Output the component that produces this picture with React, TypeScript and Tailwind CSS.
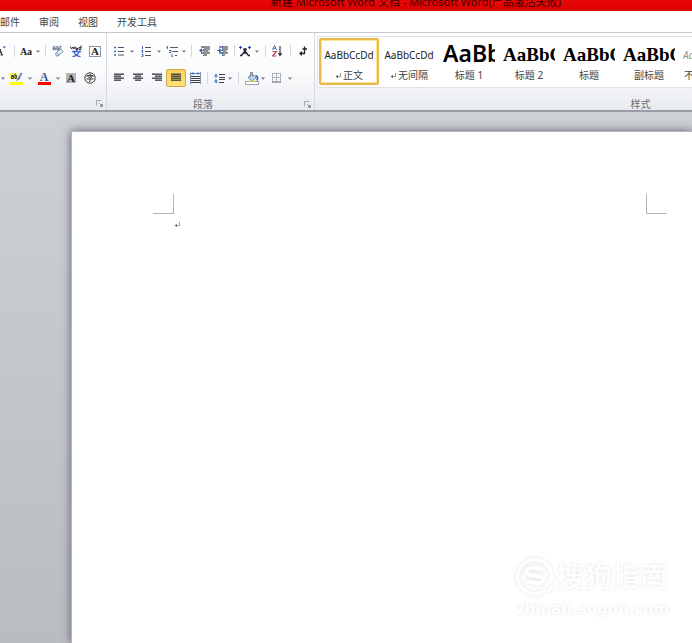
import React from "react";

type IconProps = { children: React.ReactNode; w?: number; h?: number };

function Icon({ children, w = 14, h = 14 }: IconProps) {
  return (
    <svg width={w} height={h} viewBox={`0 0 ${w} ${h}`} fill="none" className="shrink-0" aria-hidden="true">
      {children}
    </svg>
  );
}

function Tool({ label, className, children }: { label: string; className: string; children: React.ReactNode }) {
  return (
    <button type="button" aria-label={label} className={`flex h-[18px] shrink-0 items-center justify-center ${className}`}>
      {children}
    </button>
  );
}

function Arrow({ label, className }: { label: string; className: string }) {
  return (
    <Tool label={label} className={className}>
      <Icon w={4} h={3}>
        <path d="M0 .5h4L2 2.8z" fill="#70747b" />
      </Icon>
    </Tool>
  );
}

function Separator({ className }: { className: string }) {
  return (
    <span className={`flex h-3 shrink-0 justify-center ${className}`}>
      <span className="w-px bg-[#d3d6da]" />
    </span>
  );
}

function Launcher({ label }: { label: string }) {
  return (
    <button type="button" aria-label={label} className="mr-[3px] flex h-2 w-2 items-center justify-center">
      <Icon w={7} h={7}>
        <path d="M.5 5.500v-5h5" stroke="#a5a9af" />
        <path d="M3 3l2 2" stroke="#a5a9af" />
        <path d="M4 4h3v3H4z" fill="#969aa1" />
      </Icon>
    </button>
  );
}

function Lines({ rows }: { rows: [number, number][] }) {
  return (
    <Icon w={10} h={10}>
      {rows.map(([x, width], i) => (
        <rect key={i} x={x} y={i * 2 + 0.5} width={width} height="1.3" fill="#34373b" />
      ))}
    </Icon>
  );
}

function ReturnMark({ color }: { color: string }) {
  return (
    <Icon w={6} h={7}>
      <path d="M5.500 1v3.500H1" stroke={color} strokeWidth=".7" />
      <path d="M.5 4.500l2.500-1.800v3.600z" fill={color} />
    </Icon>
  );
}

function FontGroup() {
  return (
    <section aria-label="字体" className="flex w-[107px] shrink-0 flex-col border-r border-[#d6dade] pt-[9px]">
      <div className="flex items-center">
        <Tool label="缩小字体" className="w-[11px] !justify-start">
          <Icon w={7} h={12}>
            <path d="M0 4l2 6M0 7.500h1M.5 10h2.500" stroke="#303238" strokeWidth="1.2" />
            <path d="M2.500 1.500H6L4.300 3.500z" fill="#3d63b4" />
          </Icon>
        </Tool>
        <Separator className="w-[7px]" />
        <Tool label="更改大小写" className="w-4 font-['Liberation_Serif',serif] text-[10px] font-bold text-[#222]">Aa</Tool>
        <Arrow label="大小写选项" className="w-[7px]" />
        <Separator className="w-[9px]" />
        <Tool label="清除格式" className="w-4">
          <Icon w={12} h={12}>
            <path d="M0 .5h9v5H0z" fill="#dbe3ee" />
            <path d="M1 5l1.300-3.500L3.600 5M1.500 4h2M5 1v4h1.800V3H5M9.500 1.500H8v3h1.500" stroke="#66707f" />
            <path d="M3.500 8.500l5-4.500 2.500 2.500-5 4.500H4.500z" fill="#f0f4fb" stroke="#6884b3" />
            <path d="M4.500 7.500L7 10" stroke="#6884b3" />
          </Icon>
        </Tool>
        <Tool label="拼音指南" className="w-5">
          <Icon w={12} h={13}>
            <path d="M.5 1.500L1.500 4 3 2l1 2 1-2.500M6 3.500h2M6 2v2.500h2M11 .5v4H9v-2h2" stroke="#333338" />
            <path d="M2 6.500h9M6.500 5v2M4 7c1 2.500 3 4 6.500 4.700M9 7c-1 2.500-3 4-6.500 4.700" stroke="#4068c8" strokeWidth="1.300" />
          </Icon>
        </Tool>
        <Tool label="字符边框" className="w-[18px]">
          <span className="flex h-[11px] w-[12px] items-center justify-center border border-[#8795a8] font-['Liberation_Serif',serif] text-[11px] leading-none font-bold text-[#222]">A</span>
        </Tool>
      </div>
      <div className="mt-[9px] flex items-center">
        <Arrow label="文本效果选项" className="w-[5px]" />
        <Tool label="突出显示" className="w-[22px]">
          <Icon w={13} h={13}>
            <rect x="0" y="1" width="7" height="6" fill="#f5ef56" />
            <path d="M1.500 3.500h2v3h-2v-2h2M5 1.500v5h1.700v-3H5" stroke="#3a3a32" />
            <path d="M11.500 1L9 6" stroke="#6d8fc8" strokeWidth="2.200" />
            <path d="M9 5l-3 4 4-2z" fill="#59616e" />
            <rect y="10" width="13" height="3" fill="#ff0" />
          </Icon>
        </Tool>
        <Arrow label="突出显示颜色" className="w-[6px]" />
        <Tool label="字体颜色" className="w-[22px]">
          <span className="flex h-[13px] w-[13px] flex-col items-center justify-between font-['Liberation_Serif',serif] text-[12px] leading-[10px] font-bold text-[#3c5b9b]">
            A
            <span className="h-[3px] w-full shrink-0 bg-[#f00]" />
          </span>
        </Tool>
        <Arrow label="字体颜色选项" className="w-[5px]" />
        <Tool label="字符底纹" className="w-[22px]">
          <span className="flex h-[10px] w-[10px] items-center justify-center bg-[#b5b5b5] font-['Liberation_Serif',serif] text-[11px] leading-none font-bold text-[#222]">A</span>
        </Tool>
        <Tool label="带圈字符" className="w-4">
          <Icon w={12} h={12}>
            <circle cx="6" cy="6" r="5.200" stroke="#3e3e3e" />
            <path d="M6 1.500v1.500M3 5V3.500h6V5M4 5h4L6 6.500V9.500H5M2.500 7h7" stroke="#3e3e3e" />
          </Icon>
        </Tool>
      </div>
      <div className="mt-[9px] flex h-4 items-center justify-end">
        <Launcher label="字体设置" />
      </div>
    </section>
  );
}

function ParagraphGroup() {
  return (
    <section aria-label="段落" className="flex w-[208px] shrink-0 flex-col border-r border-[#d6dade] pt-[9px]">
      <div className="flex items-center pl-[3px]">
        <Tool label="项目符号" className="w-[18px]">
          <Icon w={10} h={10}>
            <path d="M0 1.500h2M0 5.500h2M0 9h2" stroke="#456ab2" strokeWidth="1.600" />
            <path d="M4 1.500h6M4 5.500h6M4 9h6" stroke="#505357" />
          </Icon>
        </Tool>
        <Arrow label="项目符号选项" className="w-2" />
        <Tool label="编号" className="w-5">
          <Icon w={10} h={11}>
            <path d="M1.500 0v3M.5 4.500h1.500l-1 2h1M.5 8.500h1.500v2H.5" stroke="#456ab2" />
            <path d="M4 1.500h6M4 5.500h6M4 9.500h6" stroke="#505357" />
          </Icon>
        </Tool>
        <Arrow label="编号选项" className="w-[6px]" />
        <Tool label="多级列表" className="w-5">
          <Icon w={12} h={11}>
            <path d="M.5 1.500H2M1.500 0v3M3 4.500h2v2H3M6 8v3h1.500" stroke="#456ab2" />
            <path d="M4 1.500h8M6.500 5.500H12M9 9.500h2" stroke="#55585c" />
          </Icon>
        </Tool>
        <Arrow label="多级列表选项" className="w-1" />
        <Separator className="w-[10px]" />
        <Tool label="减少缩进" className="w-4">
          <Icon w={11} h={10}>
            <path d="M2 1h9M5 3h6M5 5h4.500M2 7h9M5 9h3" stroke="#25282c" strokeWidth="1.200" />
            <path d="M0 4.500l3-2.500v5z" fill="#4168ae" />
            <path d="M2 4.500h3M4.500 0v10" stroke="#4168ae" strokeDasharray="2 1" />
          </Icon>
        </Tool>
        <Tool label="增加缩进" className="w-5">
          <Icon w={11} h={10}>
            <path d="M2 1h9M5 3h6M6 5h3.500M2 7h9M5 9h3" stroke="#25282c" strokeWidth="1.200" />
            <path d="M5 4.500L2 2v5z" fill="#4168ae" />
            <path d="M0 4.500h4M5.500 0v10" stroke="#4168ae" strokeDasharray="2 1" />
          </Icon>
        </Tool>
        <Separator className="w-1" />
        <Tool label="中文版式" className="w-[18px]">
          <Icon w={12} h={11}>
            <path d="M1 9.500h1.500L7.500 3M11 9.500H9.500L4.500 3M4 7h4M4.500 3h3" stroke="#26282c" strokeWidth="1.400" />
            <path d="M0 1.500h3M1.500 0v3M9 1.500h3M10.500 0v3" stroke="#3244a7" strokeWidth="1.200" />
          </Icon>
        </Tool>
        <Arrow label="中文版式选项" className="w-[6px]" />
        <Separator className="w-[10px]" />
        <Tool label="排序" className="w-[14px]">
          <Icon w={10} h={12}>
            <path d="M.5 5l2-4.500 2 4.500M1.500 3.500h2" stroke="#4168ae" />
            <path d="M.5 6.500h4l-4 4.500h4" stroke="#b84958" strokeWidth="1.200" />
            <path d="M8 1v9M6.200 8L8 10.500 9.800 8" stroke="#33363b" strokeWidth="1.200" />
          </Icon>
        </Tool>
        <Separator className="w-3" />
        <Tool label="显示编辑标记" className="w-[14px]">
          <Icon w={8} h={11}>
            <path d="M5.500 .5v7H1M3.500 3H8" stroke="#222" strokeWidth="1.300" />
            <path d="M0 7.500l3-2.500v5z" fill="#222" />
          </Icon>
        </Tool>
      </div>
      <div className="mt-[9px] flex items-center pl-[3px]">
        <Tool label="左对齐" className="w-[18px]"><Lines rows={[[0, 10], [0, 7], [0, 10], [0, 7]]} /></Tool>
        <Tool label="居中" className="w-5"><Lines rows={[[0, 10], [2, 6], [0, 10], [2, 6]]} /></Tool>
        <Tool label="右对齐" className="w-[18px]"><Lines rows={[[0, 10], [3, 7], [0, 10], [3, 7]]} /></Tool>
        <Tool label="两端对齐" className="w-5 rounded-[2px] border border-[#d0a647] bg-gradient-to-b from-[#ffd35b] to-[#ffdf76]"><Lines rows={[[0, 10], [0, 10], [0, 10], [0, 10]]} /></Tool>
        <Tool label="分散对齐" className="w-[18px]">
          <Icon w={11} h={12}>
            <path d="M.5 0v12M10.500 0v12" stroke="#8690a0" />
            <path d="M1 1.500h9M3 0v3M8 0v3" stroke="#4f7fc9" />
            <path d="M1 4.500h9M1 6.500h9M1 8.500h9M1 10.500h9" stroke="#3c3f43" />
          </Icon>
        </Tool>
        <Separator className="w-[6px]" />
        <Tool label="行距" className="w-[18px]">
          <Icon w={11} h={11}>
            <path d="M2 2v7" stroke="#477bd0" strokeDasharray="3 1" />
            <path d="M0 3.500L2 .5l2 3zM0 7.500l2 3 2-3z" fill="#477bd0" />
            <path d="M5 1.500h6M5 4.500h6M5 6.500h6M5 9.500h5" stroke="#3d4044" />
          </Icon>
        </Tool>
        <Arrow label="行距选项" className="w-1" />
        <Separator className="w-3" />
        <Tool label="底纹" className="w-4">
          <Icon w={14} h={13}>
            <path d="M3 5.500L7 2l4 3.500L7 9z" fill="#c3d5ee" stroke="#6484b3" />
            <path d="M5.500 5V.5h2v4" stroke="#77818f" />
            <path d="M10.500 3.500c2 .5 2.500 2 1.500 5" stroke="#3f68b2" strokeWidth="1.800" />
            <rect x=".5" y="9.500" width="13" height="3" fill="#fff" stroke="#a1a5aa" />
            <path d="M4 9h7" stroke="#e9de4d" />
          </Icon>
        </Tool>
        <Arrow label="底纹选项" className="w-[6px]" />
        <Tool label="边框" className="w-[22px]">
          <Icon w={10} h={10}>
            <path d="M.5 0v9M4.500 0v9M8.500 0v9M0 .5h9M0 4.500h9" stroke="#969a9f" strokeDasharray="1.500 .5" />
            <path d="M0 9h9" stroke="#65696e" />
          </Icon>
        </Tool>
        <Arrow label="边框选项" className="w-1" />
      </div>
      <div className="mt-[9px] flex h-4 items-center">
        <span className="flex-1 pr-1 text-center text-[10px] leading-4 text-[#646d7a]">段落</span>
        <Launcher label="段落设置" />
      </div>
    </section>
  );
}

const plain = "justify-center pt-[3px] text-[10px] text-[#222]";
const serif = "pt-[3px] font-['Liberation_Serif',serif] text-[19px] font-bold text-black";

const styles = [
  { name: "正文", sample: "AaBbCcDd", mark: true, look: plain },
  { name: "无间隔", sample: "AaBbCcDd", mark: true, look: plain },
  { name: "标题 1", sample: "AaBb", look: "pb-[2px] text-[23px] font-semibold text-black" },
  { name: "标题 2", sample: "AaBbC", look: serif },
  { name: "标题", sample: "AaBbC", look: serif },
  { name: "副标题", sample: "AaBbC", look: serif },
  { name: "不明显强调", sample: "AaBbCcDd", look: "pt-[3px] text-[10px] italic text-[#909090]" },
];

function StylesGroup() {
  return (
    <section aria-label="样式" className="flex min-w-0 flex-1 flex-col overflow-hidden pt-[3px] pl-[2px]">
      <div className="flex h-[52px] shrink-0 overflow-hidden border-y border-l border-[#e0e3e6] bg-white py-px pl-px">
        {styles.map((style, i) => (
          <button
            type="button"
            key={style.name}
            className={`flex h-[47px] w-[60px] shrink-0 flex-col justify-start rounded-[2px] border-2 px-[2px] ${i === 0 ? "border-[#e8b84b] ring-1 ring-[#fbe693] ring-inset" : "border-transparent"}`}
          >
            <span className={`flex h-7 w-full items-center overflow-hidden whitespace-nowrap ${style.look}`}>{style.sample}</span>
            <span className="flex h-[14px] w-full items-center justify-center gap-[2px] text-[10px] leading-[14px] whitespace-nowrap text-[#444]">
              {style.mark && <ReturnMark color="#666" />}
              {style.name}
            </span>
          </button>
        ))}
      </div>
      <div className="mt-[10px] flex h-3 justify-center pl-[272px] text-[10px] leading-3 whitespace-nowrap text-[#646d7a]">样式</div>
    </section>
  );
}

function Watermark() {
  return (
    <div className="absolute right-6 bottom-6 w-[152px] text-white">
      <div className="flex items-center gap-[2px]">
        <svg width="38" height="38" viewBox="0 0 38 38" fill="none" className="shrink-0 drop-shadow-[0_0_2px_#e2e2e2]" aria-hidden="true">
          <path d="M29.500 32.500A17 17 0 1 1 35 24M31.500 35l4.500-5" stroke="#fff" strokeWidth="3" />
          <path d="M27.500 12.500c-5-2-17-3-17 2 0 6 17 3 17 8 0 5-11 4-17.500 1.500" stroke="#fff" strokeWidth="4" />
        </svg>
        <span className="text-[28px] leading-[38px] font-medium whitespace-nowrap [text-shadow:0_0_3px_#e2e2e2]">搜狗指南</span>
      </div>
      <div className="mt-1 font-['DejaVu_Sans',sans-serif] text-[15px] leading-5 font-bold whitespace-nowrap [text-shadow:0_0_3px_#e2e2e2]">zhinan.sogou.com</div>
    </div>
  );
}

export default function App() {
  return (
    <div className="flex min-h-screen flex-col overflow-hidden bg-white font-['Noto_Sans','Noto_Sans_CJK_SC',sans-serif]">
      <header className="flex h-[11px] items-end justify-center overflow-hidden bg-gradient-to-b from-[#eb0808] to-[#d90000] pl-[140px] text-[11px] leading-[18px] whitespace-nowrap text-[#3a0000]">
        <h1>新建 Microsoft Word 文档 - Microsoft Word(产品激活失败)</h1>
      </header>
      <nav className="flex h-[22px] items-center gap-[19px] border-b border-[#c5c9ce] bg-white text-[10px] leading-4 text-[#444]">
        <button type="button">邮件</button>
        <button type="button">审阅</button>
        <button type="button">视图</button>
        <button type="button">开发工具</button>
      </nav>
      <div className="flex h-[79px] border-b-2 border-[#999ea6] bg-gradient-to-b from-white via-[#fafbfc] to-[#e8ebef]">
        <FontGroup />
        <ParagraphGroup />
        <StylesGroup />
      </div>
      <main className="flex flex-1 bg-gradient-to-b from-[#cdd1d6] to-[#b9bdc1] pt-[19px] pl-[71px]">
        <article className="relative flex-1 border-t border-l border-[#b4b8bd] bg-white pt-[62px] pr-[25px] pl-[81px] shadow-[0_0_9px_#5d6269]">
          <div className="flex justify-between">
            <span className="h-5 w-[21px] border-r border-b border-[#b5b5b5]" />
            <span className="h-5 w-[21px] border-b border-l border-[#b5b5b5]" />
          </div>
          <p className="mt-[7px] pl-[21px]"><ReturnMark color="#777" /></p>
          <Watermark />
        </article>
      </main>
    </div>
  );
}
